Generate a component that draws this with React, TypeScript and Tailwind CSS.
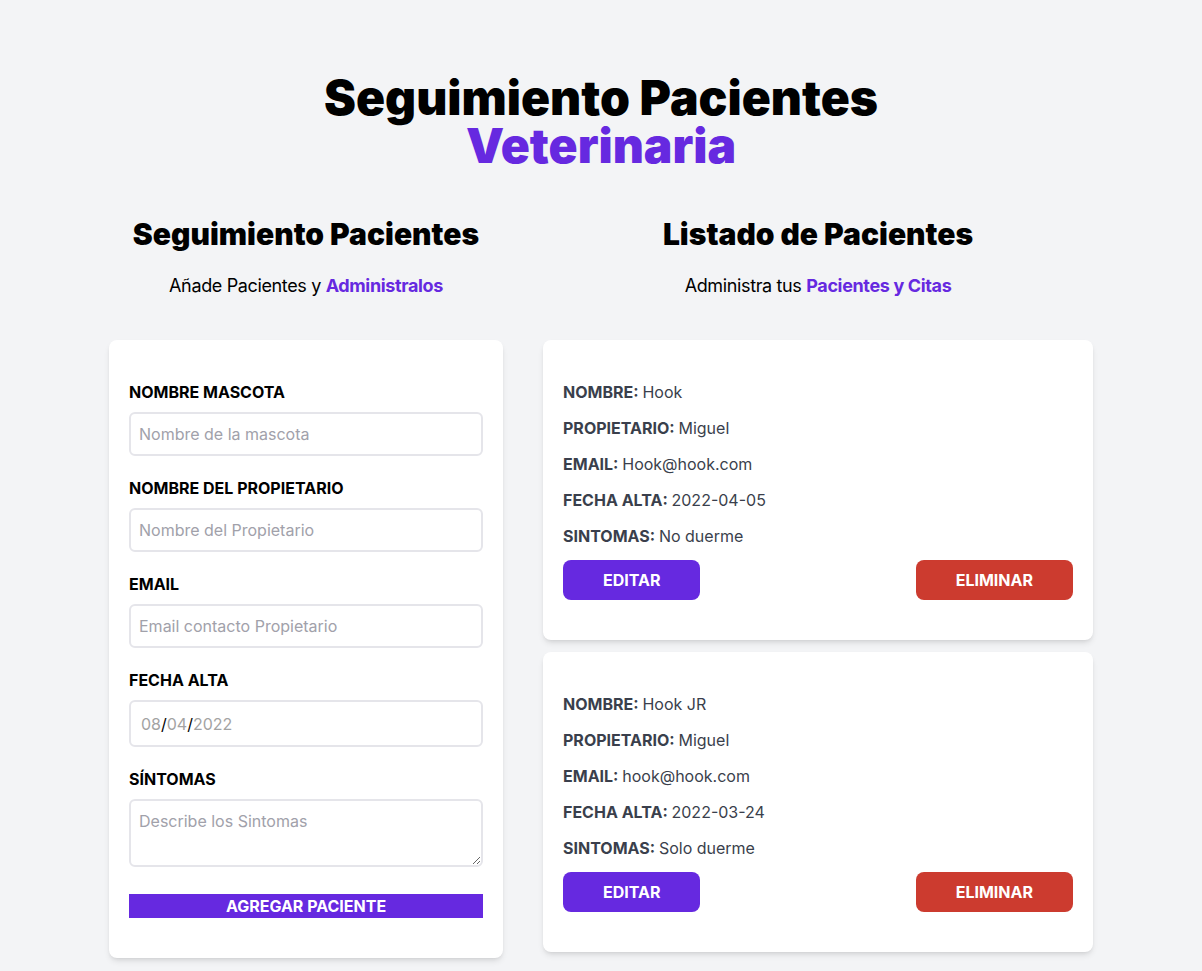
import React from 'react';

type Paciente = {
  id: number;
  nombre: string;
  propietario: string;
  email: string;
  fecha: string;
  sintomas: string;
};

const pacientes: Paciente[] = [
  { id: 1, nombre: 'Hook', propietario: 'Miguel', email: 'Hook@hook.com', fecha: '2022-04-05', sintomas: 'No duerme' },
  { id: 2, nombre: 'Hook JR', propietario: 'Miguel', email: 'hook@hook.com', fecha: '2022-03-24', sintomas: 'Solo duerme' },
];

const Campo = ({ label, children }: { label: string; children: React.ReactNode }) => (
  <div className="mb-5">
    <label className="block text-black uppercase font-bold text-base leading-6">{label}</label>
    {children}
  </div>
);

const inputClass =
  'block border-2 border-[#e5e5ea] w-full px-2 py-2 mt-2 h-[44px] text-base placeholder-[#a1a1aa] rounded-md outline-none';

const Formulario = () => (
  <div className="w-[394px] shrink-0">
    <h2 className="font-black text-3xl text-center leading-9">Seguimiento Pacientes</h2>
    <p className="text-lg leading-7 mt-5 text-center mb-10 tracking-[-0.02em]">
      Añade Pacientes y <span className="text-[#6629e0] font-bold">Administralos</span>
    </p>

    <form className="bg-white shadow-md rounded-lg py-10 px-5" onSubmit={(e) => e.preventDefault()}>
      <Campo label="Nombre Mascota">
        <input type="text" placeholder="Nombre de la mascota" className={inputClass} />
      </Campo>
      <Campo label="Nombre del Propietario">
        <input type="text" placeholder="Nombre del Propietario" className={inputClass} />
      </Campo>
      <Campo label="Email">
        <input type="email" placeholder="Email contacto Propietario" className={inputClass} />
      </Campo>
      <Campo label="Fecha Alta">
        {/* campo fecha vacío, como lo pinta Safari */}
        <div className="flex items-center border-2 border-[#e5e5ea] w-full pl-[10px] mt-2 h-[47px] text-base rounded-md text-[#a3a3a3]">
          08<span className="text-black">/</span>04<span className="text-black">/</span>2022
        </div>
      </Campo>
      <div>
        <label className="block text-black uppercase font-bold text-base leading-6">Síntomas</label>
        <textarea
          rows={2}
          placeholder="Describe los Sintomas"
          className="block border-2 border-[#e5e5ea] w-full px-2 py-2 mt-2 h-[68px] text-base leading-6 placeholder-[#a1a1aa] rounded-md outline-none"
        />
      </div>

      <button
        type="submit"
        className="block w-full mt-[27px] bg-[#6629e0] text-white uppercase font-bold text-base leading-6 h-6"
      >
        Agregar Paciente
      </button>
    </form>
  </div>
);

const Dato = ({ label, value }: { label: string; value: string }) => (
  <p className="font-bold mb-3 text-[#3a3f4c] uppercase text-base leading-6">
    {label}: <span className="font-normal normal-case">{value}</span>
  </p>
);

const Tarjeta = ({ paciente }: { paciente: Paciente }) => (
  <div className="mb-3 bg-white shadow-md px-5 py-10 rounded-lg">
    <Dato label="Nombre" value={paciente.nombre} />
    <Dato label="Propietario" value={paciente.propietario} />
    <Dato label="Email" value={paciente.email} />
    <Dato label="Fecha Alta" value={paciente.fecha} />
    <Dato label="Sintomas" value={paciente.sintomas} />
    <div className="flex justify-between">
      <button className="py-2 px-10 bg-[#6629e0] text-white font-bold uppercase rounded-lg text-base leading-6">
        Editar
      </button>
      <button className="py-2 px-10 bg-[#cc3b2f] text-white font-bold uppercase rounded-lg text-base leading-6">
        Eliminar
      </button>
    </div>
  </div>
);

const Listado = () => (
  <div className="w-[550px] shrink-0">
    <h2 className="font-black text-3xl text-center leading-9">Listado de Pacientes</h2>
    <p className="text-lg leading-7 mt-5 mb-10 text-center tracking-[-0.02em]">
      Administra tus <span className="text-[#6629e0] font-bold">Pacientes y Citas</span>
    </p>
    {pacientes.map((p) => (
      <Tarjeta key={p.id} paciente={p} />
    ))}
  </div>
);

export default function App() {
  return (
    <div
      className="h-screen overflow-hidden bg-[#f3f4f6] pt-[74px] text-black"
      style={{ fontFamily: 'Inter, "Liberation Sans", sans-serif' }}
    >
      <h1 className="font-black text-5xl leading-none text-center">
        <span className="block">Seguimiento Pacientes</span>
        <span className="block text-[#6629e0]">Veterinaria</span>
      </h1>
      <div className="mt-[46px] flex justify-center gap-10">
        <Formulario />
        <Listado />
      </div>
    </div>
  );
}
